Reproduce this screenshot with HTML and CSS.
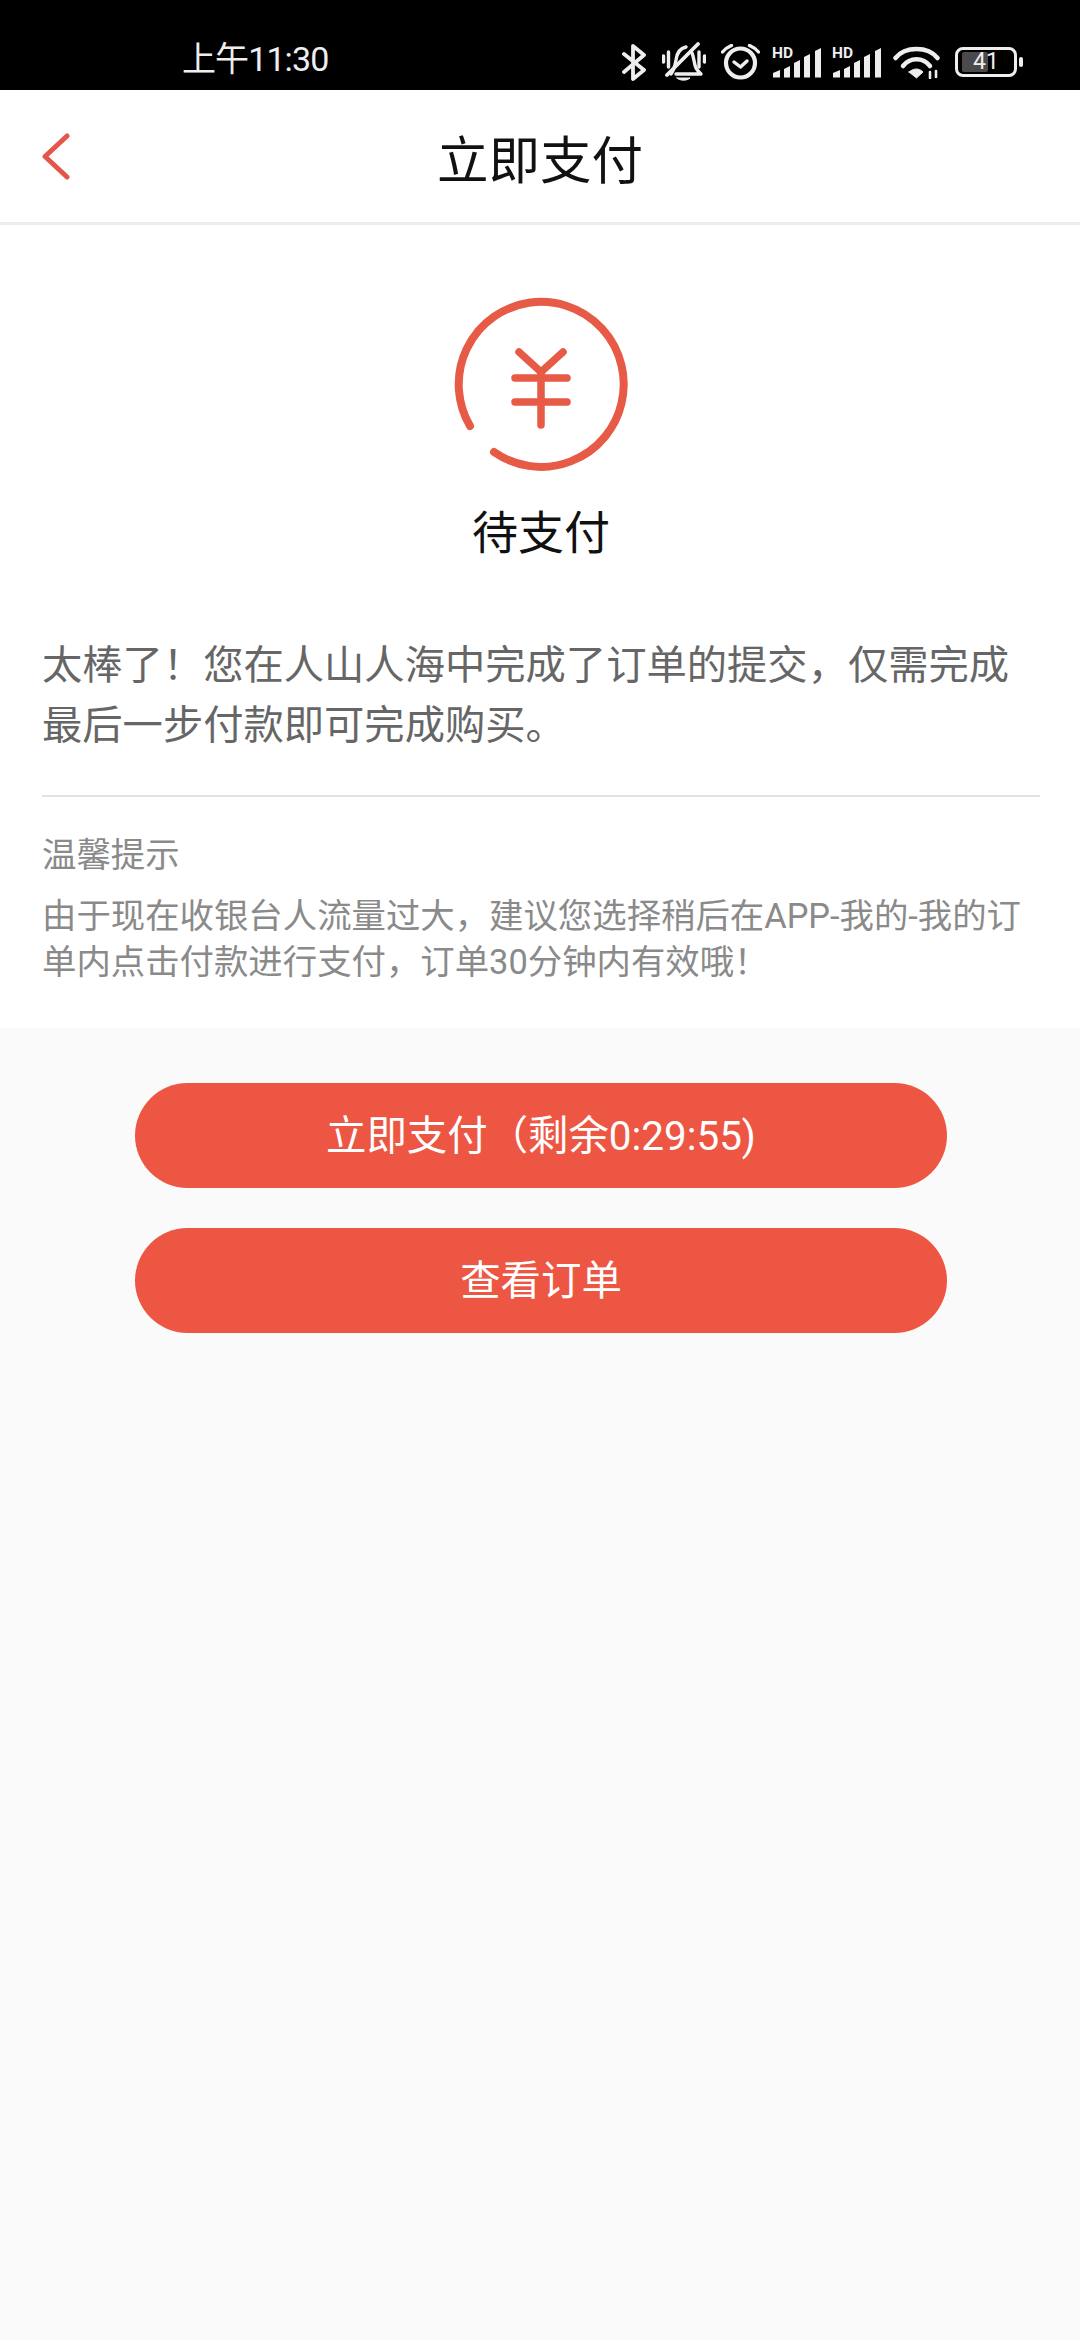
FILE: index.html
```html
<!DOCTYPE html>
<html lang="zh-CN">
<head>
	<meta charset="UTF-8">
	<meta name="viewport" content="width=device-width, initial-scale=1.0">
	<title>立即支付</title>
	<link rel="stylesheet" href="styles.css">
</head>

<body>
	<div class="status-bar">
		<span class="status-time">上午11:30</span>
		<div class="status-icons">
			<svg class="ic-bt" width="24" height="37" viewBox="0 0 24 37" fill="none" stroke="#eee" stroke-width="3.800" stroke-linecap="round" stroke-linejoin="round">
				<path d="M2 10 L22 26 L11 35 V2 L22 11 L2 28"/>
			</svg>
			<svg class="ic-bell" width="44" height="40" viewBox="0 0 44 40" fill="none" stroke="#eee" stroke-width="3.400" stroke-linecap="round" stroke-linejoin="round">
				<path d="M1.500 14 V20 M6.500 10 V25 M37 10 V25 M42.500 14 V20"/>
				<path d="M9 32 C12 28 13 24 14 18 C15 10 19 6 24 5 M30 11 C32 15 32 22 34 26 C35 28 37 30 39 32 H14"/>
				<path d="M5 33 L36 2" stroke-width="3.800"/>
				<path d="M15 36 H28 C25 39 18 39 15 36 Z" fill="#eee" stroke-width="1"/>
			</svg>
			<svg class="ic-alarm" width="39" height="36" viewBox="0 0 39 36" fill="none" stroke="#eee" stroke-linecap="round" stroke-linejoin="round">
				<circle cx="19.500" cy="19" r="14.500" stroke-width="4.200"/>
				<path d="M13 18 L19.500 23 L26 17" stroke-width="3.400"/>
				<path d="M1.500 8 C4 5 7 3 10.500 1.500 M28.500 1.500 C32 3 35 5 37.500 8" stroke-width="3.400"/>
			</svg>
			<svg class="ic-signal" width="50" height="43" viewBox="0 -6 50 43" fill="#eee">
				<text x="1" y="10.500" class="hd-text">HD</text>
				<polygon points="2,26 9,23 9,30.500 2,30.500"/>
				<polygon points="13,22 19,19 19,30.500 13,30.500"/>
				<polygon points="23,16 29,13 29,30.500 23,30.500"/>
				<polygon points="33,10 39,7 39,30.500 33,30.500"/>
				<polygon points="44,4 50,1 50,30.500 44,30.500"/>
			</svg>
			<svg class="ic-signal" width="50" height="43" viewBox="0 -6 50 43" fill="#eee">
				<text x="1" y="10.500" class="hd-text">HD</text>
				<polygon points="2,26 9,23 9,30.500 2,30.500"/>
				<polygon points="13,22 19,19 19,30.500 13,30.500"/>
				<polygon points="23,16 29,13 29,30.500 23,30.500"/>
				<polygon points="33,10 39,7 39,30.500 33,30.500"/>
				<polygon points="44,4 50,1 50,30.500 44,30.500"/>
			</svg>
			<svg class="ic-wifi" width="47" height="33" viewBox="0 0 47 33" fill="none" stroke="#eee" stroke-width="4.500" stroke-linecap="round">
				<path d="M2.500 12 C12 0 35 0 44.500 12"/>
				<path d="M10 20 C17 11 30 11 37 20"/>
				<path d="M16 26 L23.500 32 L30 26 C26 22 21 22 16 26 Z" fill="#eee" stroke-width="1"/>
				<path d="M37 26 V32 M43 25 V31" stroke-width="2.600"/>
			</svg>
			<div class="battery">
				<div class="battery-body">
					<div class="battery-fill"></div>
					<span class="battery-num">41</span>
				</div>
				<div class="battery-tip"></div>
			</div>
		</div>
	</div>

	<header class="nav">
		<a class="back" href="#">
			<svg width="30" height="48" viewBox="0 0 30 48" fill="none" stroke="#e4564a" stroke-width="5" stroke-linecap="round" stroke-linejoin="round">
				<path d="M25 3 L3 23.500 L25 44"/>
			</svg>
		</a>
		<h1 class="nav-title">立即支付</h1>
	</header>

	<main>
		<section class="card">
			<div class="state">
				<svg class="state-icon" width="176" height="176" viewBox="0 0 176 176" fill="none" stroke="#e75a46" stroke-width="8" stroke-linecap="round" stroke-linejoin="round">
					<path d="M17 130 A82.500 82.500 0 1 1 41 156"/>
					<path d="M66 56 L88 76 L110 56" stroke-width="7.500"/>
					<path d="M62 82 H114 M62 106 H114 M88 76 V129" stroke-width="7.500"/>
				</svg>
				<div class="state-label">待支付</div>
			</div>
			<p class="intro">太棒了！您在人山人海中完成了订单的提交，仅需完成最后一步付款即可完成购买。</p>
			<div class="tips">
				<div class="tips-title">温馨提示</div>
				<p class="tips-text">由于现在收银台人流量过大，建议您选择稍后在APP-我的-我的订单内点击付款进行支付，订单30分钟内有效哦！</p>
			</div>
		</section>

		<div class="actions">
			<a class="btn" href="#">立即支付（剩余0:29:55)</a>
			<a class="btn" href="#">查看订单</a>
		</div>
	</main>
</body>
</html>
```

FILE: styles.css
```css
html, body {
  height: 100%;
}

body {
  font-family: Roboto, "Noto Sans CJK SC", sans-serif;
  margin: 0;
  background-color: #fafafa;
  color: #000;
}

a {
  text-decoration: none;
}

.status-bar {
  height: 90px;
  background-color: #000;
  color: #eee;
  display: flex;
  align-items: flex-end;
  justify-content: space-between;
  padding: 0 57px 5px 182px;
  box-sizing: border-box;
}

.status-time {
  font-size: 34px;
  line-height: 46px;
  letter-spacing: -0.9px;
  margin-bottom: 3px;
}

.status-icons {
  display: flex;
  align-items: center;
  height: 46px;
}

.ic-bell {
  margin-left: 16px;
}

.ic-alarm {
  margin-left: 15px;
}

.ic-signal {
  margin-left: 11px;
}

.ic-signal + .ic-signal {
  margin-left: 10px;
}

.ic-wifi {
  margin-left: 12px;
}

.hd-text {
  font-family: Roboto, sans-serif;
  font-size: 15.5px;
  font-weight: 700;
  fill: #eee;
}

.battery {
  margin-left: 15px;
  display: flex;
  align-items: center;
  gap: 2px;
}

.battery-body {
  width: 62px;
  height: 30px;
  border: 3px solid #eee;
  border-radius: 8px;
  box-sizing: border-box;
  position: relative;
  display: flex;
  align-items: center;
  justify-content: center;
}

.battery-fill {
  position: absolute;
  left: 4px;
  top: 2px;
  bottom: 2px;
  width: 26px;
  background-color: #4a4a4a;
  border-radius: 2px;
}

.battery-num {
  position: relative;
  font-size: 23px;
  line-height: 24px;
  color: #eee;
}

.battery-tip {
  width: 4px;
  height: 10px;
  background-color: #eee;
  border-radius: 2px;
}

.nav {
  height: 135px;
  box-sizing: border-box;
  background-color: #fff;
  border-bottom: 3px solid #ededed;
  display: flex;
  align-items: center;
  justify-content: center;
  position: relative;
}

.back {
  position: absolute;
  left: 42px;
  top: 43px;
  display: block;
  line-height: 0;
}

.nav-title {
  margin: 0;
  font-size: 51.5px;
  font-weight: 400;
  color: #111;
}

.card {
  background-color: #fff;
  padding: 71px 40px 0 42px;
  height: 803px;
  box-sizing: border-box;
}

.state {
  display: flex;
  flex-direction: column;
  align-items: center;
}

.state-icon {
  display: block;
}

.state-label {
  margin-top: 29px;
  font-size: 46px;
  line-height: 64px;
  color: #111;
}

.intro {
  margin: 71px 0 0 0;
  font-size: 40.3px;
  line-height: 60px;
  color: #666;
  padding-bottom: 39px;
  border-bottom: 2px solid #e2e2e2;
}

.tips {
  margin-top: 35px;
  color: #8a8a8a;
  font-size: 34.4px;
  line-height: 46px;
}

.tips-title {
  margin-bottom: 15px;
}

.tips-text {
  margin: 0;
}

.actions {
  display: flex;
  flex-direction: column;
  gap: 40px;
  padding: 55px 133px 0 135px;
}

.btn {
  height: 105px;
  border-radius: 53px;
  background-color: #ee5644;
  color: #fff;
  font-size: 40.4px;
  padding-bottom: 7px;
  box-sizing: border-box;
  display: flex;
  align-items: center;
  justify-content: center;
}
```
